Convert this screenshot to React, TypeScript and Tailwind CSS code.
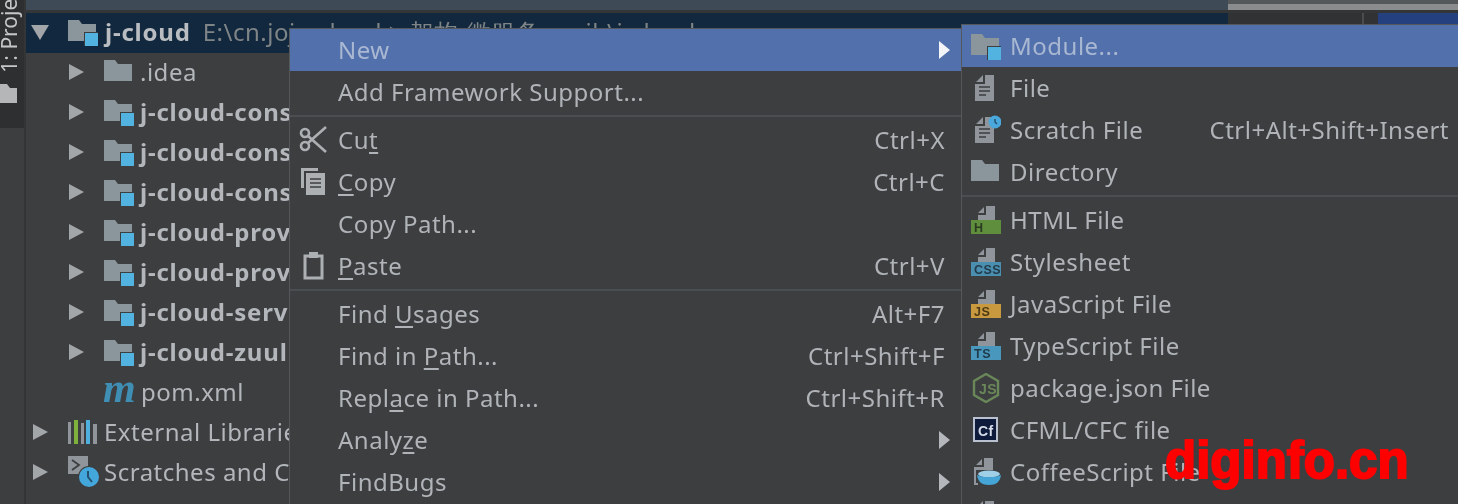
import React from "react";

const sans = "font-['Noto_Sans','Open_Sans',sans-serif]";

const Arrow = ({ down }: { down?: boolean }) => (
  <svg width="18" height="18" viewBox="0 0 18 18" className="shrink-0">
    <polygon points={down ? "0,2 18,2 9,17" : "1,1 16,9 1,17"} fill="#a3a6a8" />
  </svg>
);

const Folder = ({ mod, size = 30 }: { mod?: boolean; size?: number }) => (
  <svg width={size} height={size} viewBox="0 0 30 30" className="shrink-0">
    <path d="M0 3h11l3 4h14v17H0z" fill="#8b959c" />
    {mod && <rect x="16" y="15" width="14" height="14" fill="#3d3e40" />}
    {mod && <rect x="17" y="16" width="13" height="13" fill="#52b2e0" />}
  </svg>
);

const Doc = ({ clock }: { clock?: boolean }) => (
  <svg width="30" height="30" viewBox="0 0 30 30" className="shrink-0">
    <path d="M5 9l7-7v7zM14 2h9v26H4V11h10z" fill="#8f959a" />
    <path d="M8 14h11M8 18h11M8 22h7" stroke="#3d3e40" strokeWidth="1.6" />
    {clock && <circle cx="24" cy="7" r="6.5" fill="#4aa8dc" />}
    {clock && <path d="M24 4v3l2 2" stroke="#24506e" strokeWidth="1.5" fill="none" />}
  </svg>
);

const TypedFile = ({ label, color, dark }: { label: string; color: string; dark: string }) => (
  <svg width="30" height="30" viewBox="0 0 30 30" className="shrink-0">
    <path d="M7 8l6-6v6zM15 1h9v14H7v-5h8z" fill="#8f959a" />
    <rect x="0" y="15" width="30" height="14" fill={color} />
    <text x="3" y="27" fontSize="12.5" fontWeight="700" fontFamily="Liberation Sans" fill={dark}>{label}</text>
  </svg>
);

const NodeIcon = () => (
  <svg width="30" height="30" viewBox="0 0 30 30" className="shrink-0">
    <polygon points="15,1 27,8 27,22 15,29 3,22 3,8" fill="none" stroke="#6a8759" strokeWidth="2.4" />
    <text x="8" y="21" fontSize="14" fontWeight="700" fontFamily="Liberation Sans" fill="#6a8759">JS</text>
  </svg>
);

const CfIcon = () => (
  <svg width="30" height="30" viewBox="0 0 30 30" className="shrink-0">
    <rect x="3" y="3" width="23" height="23" fill="#0d1a3c" stroke="#b9c0cf" strokeWidth="2" />
    <text x="7" y="21" fontSize="14" fontWeight="700" fontFamily="Liberation Sans" fill="#d5dbe8">Cf</text>
  </svg>
);

const CoffeeIcon = () => (
  <svg width="30" height="30" viewBox="0 0 30 30" className="shrink-0">
    <path d="M5 8l6-6v6zM13 1h9v12H5v13h2v2H3V10h10z" fill="#8f959a" />
    <ellipse cx="18" cy="17" rx="11" ry="3.5" fill="#9fd0e8" />
    <path d="M6 18c1 7 5 10 12 10s11-3 12-10c-6 3-18 3-24 0z" fill="#45a5d6" />
  </svg>
);

const Scissors = () => (
  <svg width="30" height="30" viewBox="0 0 30 30" className="shrink-0" fill="none" stroke="#adb0b2" strokeWidth="2.6">
    <circle cx="6" cy="8" r="4" />
    <circle cx="6" cy="21" r="4" />
    <path d="M9 11l18 16M9 18L27 2" />
  </svg>
);

const CopyIcon = () => (
  <svg width="30" height="30" viewBox="0 0 30 30" className="shrink-0">
    <path d="M2 1h17v3H5v17H2z" fill="#adb0b2" />
    <rect x="7" y="6" width="19" height="22" fill="#adb0b2" />
    <path d="M11 12h11M11 16h11M11 20h11" stroke="#3d3e40" strokeWidth="1.7" />
  </svg>
);

const PasteIcon = () => (
  <svg width="30" height="30" viewBox="0 0 30 30" className="shrink-0" fill="none">
    <rect x="6" y="5" width="17" height="22" stroke="#adb0b2" strokeWidth="3" />
    <rect x="10" y="1" width="9" height="6" fill="#adb0b2" />
  </svg>
);

const LibIcon = () => (
  <svg width="30" height="24" viewBox="0 0 30 24" className="shrink-0">
    <rect x="0" y="2" width="3" height="22" fill="#8f959a" />
    <rect x="6" y="0" width="4" height="24" fill="#7fb23c" />
    <rect x="13" y="3" width="3" height="21" fill="#8f959a" />
    <rect x="18" y="0" width="4" height="24" fill="#4fb0dd" />
    <rect x="25" y="4" width="4" height="20" fill="#8f959a" />
  </svg>
);

const ScratchIcon = () => (
  <svg width="32" height="32" viewBox="0 0 32 32" className="shrink-0">
    <rect x="0" y="0" width="20" height="18" fill="#8f959a" />
    <path d="M4 4l7 5-7 5" stroke="#3d3e40" strokeWidth="1.8" fill="none" />
    <circle cx="21" cy="21" r="11" fill="#3d3e40" />
    <circle cx="21" cy="21" r="10" fill="#44a7dc" />
    <path d="M20 15v6l4 5" stroke="#24506e" strokeWidth="2" fill="none" />
  </svg>
);

const SubArrow = ({ active }: { active?: boolean }) => (
  <svg width="11" height="18" viewBox="0 0 11 18" className="shrink-0 mr-[-5px]">
    <polygon points="0,0 11,9 0,18" fill={active ? "#f2f4f8" : "#b4b8bc"} />
  </svg>
);

const Mn = ({ children }: { children: string }) => (
  <span className="underline underline-offset-[3px] decoration-[1.5px]">{children}</span>
);

type MenuRow = {
  label: React.ReactNode;
  icon?: React.ReactNode;
  keys?: string;
  sub?: boolean;
  active?: boolean;
  sep?: boolean;
};

const mainMenu: MenuRow[] = [
  { label: "New", sub: true, active: true },
  { label: "Add Framework Support...", sep: true },
  { label: <>Cu<Mn>t</Mn></>, icon: <Scissors />, keys: "Ctrl+X" },
  { label: <><Mn>C</Mn>opy</>, icon: <CopyIcon />, keys: "Ctrl+C" },
  { label: "Copy Path..." },
  { label: <><Mn>P</Mn>aste</>, icon: <PasteIcon />, keys: "Ctrl+V", sep: true },
  { label: <>Find <Mn>U</Mn>sages</>, keys: "Alt+F7" },
  { label: <>Find in <Mn>P</Mn>ath...</>, keys: "Ctrl+Shift+F" },
  { label: <>Repl<Mn>a</Mn>ce in Path...</>, keys: "Ctrl+Shift+R" },
  { label: <>Analy<Mn>z</Mn>e</>, sub: true },
  { label: "FindBugs", sub: true },
];

const newMenu: MenuRow[] = [
  { label: "Module...", icon: <Folder mod />, active: true },
  { label: "File", icon: <Doc /> },
  { label: "Scratch File", icon: <Doc clock />, keys: "Ctrl+Alt+Shift+Insert" },
  { label: "Directory", icon: <Folder />, sep: true },
  { label: "HTML File", icon: <TypedFile label="H" color="#5f8f3c" dark="#2b3b22" /> },
  { label: "Stylesheet", icon: <TypedFile label="CSS" color="#4a8fb0" dark="#233b4a" /> },
  { label: "JavaScript File", icon: <TypedFile label="JS" color="#c9993f" dark="#4d3b16" /> },
  { label: "TypeScript File", icon: <TypedFile label="TS" color="#4a97bd" dark="#1f3a4a" /> },
  { label: "package.json File", icon: <NodeIcon /> },
  { label: "CFML/CFC file", icon: <CfIcon /> },
  { label: "CoffeeScript File", icon: <CoffeeIcon /> },
  { label: "Gradle Kotlin DSL", icon: <Doc /> },
];

const Menu = ({ rows, labelPad, pad, className }: { rows: MenuRow[]; labelPad: string; pad: string; className: string }) => (
  <div className={`absolute bg-[#3d3e40] border-l border-t border-[#55585a] ${className}`}>
    {rows.map((row, i) => (
      <div key={i}>
        <div className={`h-[42px] flex items-center text-[24px] tracking-[0.5px] ${pad} ${row.active ? "bg-[#5270ab] text-[#a9b8d2]" : "text-[#b0b4b8]"}`}>
          <div className={`${labelPad} shrink-0 flex justify-center`}>{row.icon}</div>
          <span className="whitespace-nowrap">{row.label}</span>
          <span className="ml-auto whitespace-nowrap">{row.keys}</span>
          {row.sub && <SubArrow active={row.active} />}
        </div>
        {row.sep && (
          <div className="h-[6px] flex items-center">
            <div className="h-[2px] w-full bg-[#4b4e50]" />
          </div>
        )}
      </div>
    ))}
  </div>
);

const modules = ["j-cloud-consumer", "j-cloud-consumer", "j-cloud-consumer", "j-cloud-provider", "j-cloud-provider", "j-cloud-server", "j-cloud-zuul"];

const Row = ({ arrow, icon, children, pad }: { arrow?: boolean; icon: React.ReactNode; children: React.ReactNode; pad: string }) => (
  <div className={`h-10 flex items-center whitespace-nowrap pb-[2px] ${pad}`}>
    <div className="w-[36px] shrink-0">{arrow && <Arrow />}</div>
    <div className="w-[37px] shrink-0 flex">{icon}</div>
    {children}
  </div>
);

export default function App() {
  return (
    <div className={`relative w-[1458px] h-[504px] overflow-hidden bg-[#3d3e40] flex blur-[0.6px] ${sans}`}>
      {/* tool window stripe */}
      <div className="w-[26px] shrink-0 border-r-2 border-[#333536]">
        <div className="h-[128px] bg-[#2d2f30] flex flex-col items-start justify-end pb-[25px] overflow-hidden">
          <span className="shrink-0 [writing-mode:vertical-rl] rotate-180 text-[21px] leading-[18px] text-[#c4c6c8] whitespace-nowrap mb-[11px]">1: Project</span>
          <svg width="17" height="19" viewBox="0 0 17 19" className="shrink-0">
            <path d="M0 0h7l3 4h7v15H0z" fill="#b4b6b8" />
          </svg>
        </div>
      </div>

      <div className="flex-1 min-w-0">
        {/* top strip */}
        <div className="h-[13px] flex border-b-[3px] border-[#333536]">
          <div className="w-[1202px] bg-[#3e4a56]" />
          <div className="flex-1 flex flex-col">
            <div className="h-[4px] bg-[#55585a]" />
            <div className="h-[6px] bg-[#8a8c8e]" />
          </div>
        </div>

        <div className="flex">
          {/* project tree */}
          <div className="w-[1202px] shrink-0 text-[24px] text-[#b3b7bb] tracking-[0.5px]">
            <div className="h-10 flex items-center whitespace-nowrap bg-[#11283e] pl-[5px] pb-[2px]">
              <div className="w-[37px] shrink-0"><Arrow down /></div>
              <div className="w-[37px] shrink-0 flex"><Folder mod /></div>
              <span className="font-bold tracking-[0.8px] mr-[12px] text-[#b9bdc1]">j-cloud</span>
              <span className="text-[#7f8487]">E:\cn.jojo.cloud &gt; 架构-微服务-mail-\j-cloud</span>
            </div>
            <Row arrow pad="pl-[42px]" icon={<Folder />}>
              <span className="-ml-[1px]">.idea</span>
            </Row>
            {modules.map((name, i) => (
              <Row key={i} arrow pad="pl-[42px]" icon={<Folder mod />}>
                <span className="font-bold tracking-[0.8px] -ml-[1px]">{name}</span>
              </Row>
            ))}
            <Row pad="pl-[42px]" icon={<span className="font-['Liberation_Serif'] italic font-bold text-[42px] leading-none text-[#3f8fb5] -mt-[9px] -ml-[1px]">m</span>}>
              <span>pom.xml</span>
            </Row>
            <Row arrow pad="pl-[6px]" icon={<LibIcon />}>
              <span className="-ml-[1px]">External Libraries</span>
            </Row>
            <Row arrow pad="pl-[6px]" icon={<ScratchIcon />}>
              <span className="-ml-[1px]">Scratches and Consoles</span>
            </Row>
          </div>
          {/* editor side */}
          <div className="flex-1 h-[11px] flex bg-[#303234]">
            <div className="w-[136px] border-r-2 border-[#4a4c4e]" />
            <div className="w-[14px]" />
            <div className="flex-1 bg-[#25407f]" />
          </div>
        </div>
      </div>

      <Menu rows={mainMenu} labelPad="w-[48px]" pad="pr-[16px]" className="left-[289px] top-[28px] w-[672px] h-[476px] overflow-hidden" />
      <Menu rows={newMenu} labelPad="w-[48px]" pad="pr-[9px]" className="left-[961px] top-[24px] w-[497px] h-[480px] overflow-hidden" />

      <span className="absolute left-[1165px] top-[435px] text-[51px] leading-none font-bold text-[#ff0000] font-['Liberation_Sans',sans-serif] [-webkit-text-stroke:2px_#ff0000]">diginfo.cn</span>
    </div>
  );
}
